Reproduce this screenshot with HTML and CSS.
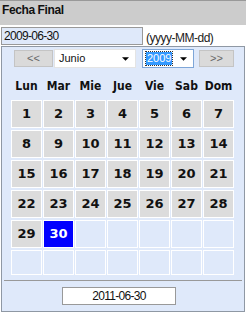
FILE: index.html
```html
<!DOCTYPE html>
<html>

<head>
    <title>Fecha Final</title>
    <link rel="stylesheet" href="styles.css">
</head>

<body>

    <div class="header">Fecha Final</div>

    <div class="date-row">
        <div class="date-input">2009-06-30</div>
        <span class="date-hint">(yyyy-MM-dd)</span>
    </div>

    <!-- Calendar popup -->
    <div class="calendar">
        <div class="nav-row">
            <button class="nav-button">&lt;&lt;</button>
            <div class="fake-select month-select">
                <span class="select-text">Junio</span>
                <svg class="select-arrow" viewBox="0 0 8 4"><path d="M0 0h8L4 4z" /></svg>
            </div>
            <div class="fake-select year-select">
                <span class="select-text selected-text">2009</span>
                <svg class="select-arrow" viewBox="0 0 8 4"><path d="M0 0h8L4 4z" /></svg>
            </div>
            <button class="nav-button">&gt;&gt;</button>
        </div>

        <div class="days">
            <div class="day-name">Lun</div>
            <div class="day-name">Mar</div>
            <div class="day-name">Mie</div>
            <div class="day-name">Jue</div>
            <div class="day-name">Vie</div>
            <div class="day-name">Sab</div>
            <div class="day-name">Dom</div>

            <div class="day">1</div>
            <div class="day">2</div>
            <div class="day">3</div>
            <div class="day">4</div>
            <div class="day">5</div>
            <div class="day">6</div>
            <div class="day">7</div>

            <div class="day">8</div>
            <div class="day">9</div>
            <div class="day">10</div>
            <div class="day">11</div>
            <div class="day">12</div>
            <div class="day">13</div>
            <div class="day">14</div>

            <div class="day">15</div>
            <div class="day">16</div>
            <div class="day">17</div>
            <div class="day">18</div>
            <div class="day">19</div>
            <div class="day">20</div>
            <div class="day">21</div>

            <div class="day">22</div>
            <div class="day">23</div>
            <div class="day">24</div>
            <div class="day">25</div>
            <div class="day">26</div>
            <div class="day">27</div>
            <div class="day">28</div>

            <div class="day">29</div>
            <div class="day day-selected">30</div>
            <div class="day day-empty"></div>
            <div class="day day-empty"></div>
            <div class="day day-empty"></div>
            <div class="day day-empty"></div>
            <div class="day day-empty"></div>

            <div class="day day-empty short"></div>
            <div class="day day-empty short"></div>
            <div class="day day-empty short"></div>
            <div class="day day-empty short"></div>
            <div class="day day-empty short"></div>
            <div class="day day-empty short"></div>
            <div class="day day-empty short"></div>
        </div>

        <div class="divider"></div>

        <div class="today-row">
            <div class="today-box">2011-06-30</div>
        </div>
    </div>

</body>

</html>
```

FILE: styles.css
```css
body {
    font-family: 'Liberation Sans', Arial, sans-serif;
    margin: 0;
    padding: 0;
    background-color: #ffffff;
    color: #111;
    width: 246px;
}

.header {
    height: 25px;
    background-color: #cccccc;
    border-top: 1px solid #999;
    padding: 2px 0 0 2px;
    box-sizing: border-box;
    font-size: 12px;
    font-weight: bold;
    letter-spacing: -0.4px;
    line-height: 14px;
}

.date-row {
    display: flex;
    align-items: flex-end;
    margin-top: 2px;
    height: 18px;
}

.date-input {
    width: 142px;
    height: 18px;
    margin-left: 1px;
    box-sizing: border-box;
    border: 1px solid #999;
    background-color: #dfe9fa;
    font-size: 12px;
    letter-spacing: -0.7px;
    line-height: 16px;
    padding-left: 2px;
}

.date-hint {
    margin-left: 3px;
    font-size: 12px;
    letter-spacing: -0.5px;
    line-height: 14px;
    color: #222;
}

.calendar {
    margin: 1px 0 0 1px;
    width: 244px;
    height: 266px;
    box-sizing: border-box;
    border: 1px solid #8f98a4;
    background-color: #dfe9fa;
}

.nav-row {
    display: flex;
    align-items: center;
    height: 19px;
    margin-top: 2px;
    padding-left: 12px;
}

.nav-button {
    width: 39px;
    height: 17px;
    margin: 0 1px 0 0;
    padding: 0;
    border: 1px solid #c4c4c4;
    background-color: #dadada;
    color: #666;
    font-family: 'Liberation Sans', Arial, sans-serif;
    font-size: 11px;
    line-height: 15px;
}

.nav-button:last-child {
    width: 35px;
    margin-left: 5px;
}

.fake-select {
    display: flex;
    align-items: center;
    height: 19px;
    box-sizing: border-box;
    background-color: #ffffff;
    border: 1px solid #e4e4e4;
    font-size: 11px;
    position: relative;
    flex-shrink: 0;
}

.month-select {
    width: 82px;
    padding-left: 4px;
}

.year-select {
    width: 52px;
    margin-left: 6px;
    padding-left: 3px;
    border-color: #7ea6d8;
}

.select-text {
    line-height: 13px;
    flex-shrink: 0;
    white-space: nowrap;
}

.selected-text {
    background-color: #3399ff;
    color: #ffffff;
    outline: 1px dotted #333;
    padding: 0 1px;
}

.select-arrow {
    position: absolute;
    right: 6px;
    top: 7px;
    width: 7px;
    height: 4px;
    fill: #000;
}

.days {
    display: grid;
    grid-template-columns: repeat(7, 31px);
    column-gap: 1px;
    row-gap: 2px;
    margin: 11px 0 0 9px;
}

.day-name {
    font-family: 'DejaVu Sans Condensed', 'DejaVu Sans', sans-serif;
    font-size: 12px;
    font-weight: bold;
    text-align: center;
    line-height: 14px;
    height: 19px;
}

.day {
    height: 28px;
    box-sizing: border-box;
    border: 1px solid #ffffff;
    background-color: #dcdcdc;
    font-family: 'DejaVu Sans', Verdana, sans-serif;
    font-size: 13px;
    font-weight: bold;
    text-align: center;
    line-height: 26px;
}

.day-selected {
    background-color: #0000ff;
    color: #ffffff;
}

.day-empty {
    background-color: transparent;
}

.short {
    height: 25px;
}

.divider {
    margin: 5px 2px 0 2px;
    border-top: 1px solid #999;
}

.today-row {
    display: flex;
    justify-content: center;
    margin-top: 6px;
    padding-right: 8px;
}

.today-box {
    width: 114px;
    height: 18px;
    box-sizing: border-box;
    border: 1px solid #999;
    background-color: #ffffff;
    font-size: 12px;
    letter-spacing: -0.7px;
    line-height: 16px;
    text-align: center;
}
```
